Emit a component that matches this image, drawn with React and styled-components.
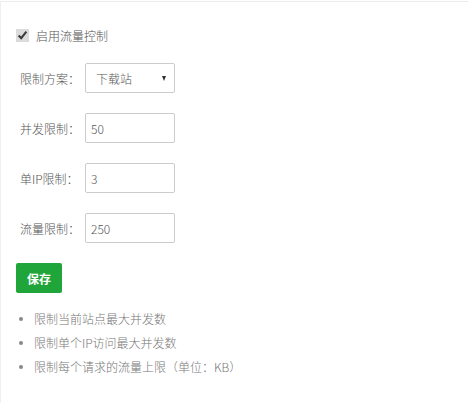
import React, { useState } from 'react';
import styled, { createGlobalStyle } from 'styled-components';

const GlobalStyle = createGlobalStyle`
  body {
    margin: 0;
    background: #fff;
    font-family: "Microsoft YaHei", "Noto Sans CJK SC", "Liberation Sans", sans-serif;
    font-size: 12px;
    font-weight: 300;
    color: #555;
  }
`;

// styled-components
const Panel = styled.div`
  margin-top: 1px;
  border-top: 1px solid #ececec;
  border-left: 1px solid #f0f0f0;
  height: 402px;
  box-sizing: border-box;
  padding: 23px 15px 0 15px;
`;

const CheckRow = styled.label`
  display: flex;
  align-items: center;
  gap: 7px;
  height: 20px;
  color: #555;
  font-size: 12px;
`;

const Check = styled.input`
  margin: 0;
  width: 13px;
  height: 13px;
  accent-color: #dcdcdc;
`;

const Form = styled.div`
  display: flex;
  flex-direction: column;
  gap: 20px;
  margin-top: 18px;
`;

const Row = styled.div`
  display: flex;
  align-items: center;
  height: 30px;
`;

const Label = styled.span`
  width: 65px;
  padding-left: 4px;
  color: #555;
  font-size: 12px;
`;

const Field = styled.div`
  position: relative;
  width: 90px;
  height: 30px;
  box-sizing: border-box;
  border: 1px solid #ccc;
  border-radius: 2px;
  display: flex;
  align-items: center;
  padding-left: ${p => p.$pad || 5}px;
  color: #555;
  font-size: 12px;
`;

const Input = styled.input`
  border: none;
  outline: none;
  width: 100%;
  padding: 0;
  font: inherit;
  font-size: 12px;
  color: #555;
  background: transparent;
`;

const Arrow = styled.span`
  position: absolute;
  right: 8px;
  top: 12px;
  width: 0;
  height: 0;
  border-left: 2.5px solid transparent;
  border-right: 2.5px solid transparent;
  border-top: 5px solid #333;
`;

const SaveButton = styled.button`
  margin-top: 20px;
  width: 46px;
  height: 30px;
  border: none;
  border-radius: 2px;
  background: #20a53a;
  color: #fff;
  font: inherit;
  font-size: 12px;
  font-weight: bold;
  padding: 0;
`;

const Tips = styled.ul`
  list-style: none;
  margin: 17px 0 0 0;
  padding: 0 0 0 3px;
  display: flex;
  flex-direction: column;
  gap: 7px;
`;

const Tip = styled.li`
  display: flex;
  align-items: center;
  height: 17px;
  color: #777;
  font-size: 12px;
  &::before {
    content: '';
    width: 4px;
    height: 4px;
    border-radius: 50%;
    background: #888;
    margin-right: 11px;
  }
`;
// end styled-components

const App = () => {
    const [enabled, setEnabled] = useState(true);
    const [limits, setLimits] = useState({ perserver: '50', perip: '3', rate: '250' });

    const fields = [
        { key: 'perserver', label: '并发限制：' },
        { key: 'perip', label: '单IP限制：' },
        { key: 'rate', label: '流量限制：' },
    ];

    return (
        <>
            <GlobalStyle />
            <Panel>
                <CheckRow>
                    <Check type="checkbox" checked={enabled} onChange={e => setEnabled(e.target.checked)} />
                    启用流量控制
                </CheckRow>
                <Form>
                    <Row>
                        <Label>限制方案：</Label>
                        <Field $pad={10}>
                            下载站
                            <Arrow />
                        </Field>
                    </Row>
                    {fields.map(f => (
                        <Row key={f.key}>
                            <Label>{f.label}</Label>
                            <Field>
                                <Input
                                    value={limits[f.key]}
                                    onChange={e => setLimits({ ...limits, [f.key]: e.target.value })}
                                />
                            </Field>
                        </Row>
                    ))}
                </Form>
                <SaveButton>保存</SaveButton>
                <Tips>
                    <Tip>限制当前站点最大并发数</Tip>
                    <Tip>限制单个IP访问最大并发数</Tip>
                    <Tip>限制每个请求的流量上限（单位：KB）</Tip>
                </Tips>
            </Panel>
        </>
    );
};

export default App;
